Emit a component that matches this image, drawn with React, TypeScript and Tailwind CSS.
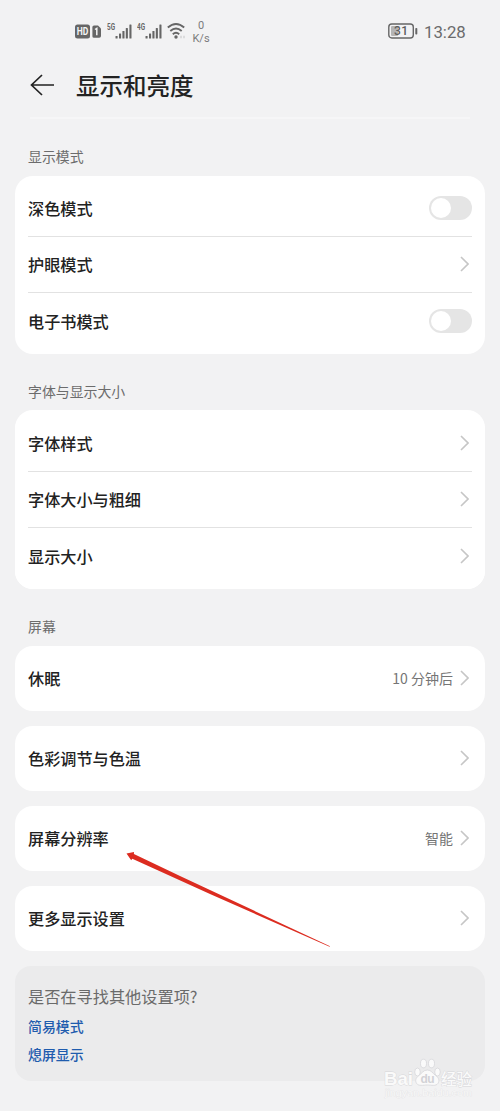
import type { ReactNode } from "react";

function Chevron() {
  return (
    <svg className="block h-4 w-[9px] shrink-0" viewBox="0 0 9 16" fill="none" stroke="#c6c6c6" strokeWidth="1.6">
      <path d="M1 1 L8 8 L1 15" />
    </svg>
  );
}

function Toggle() {
  return (
    <div className="flex h-6 w-[43px] shrink-0 items-center rounded-full bg-[#e5e5e5] px-[2px]">
      <div className="h-5 w-5 rounded-full bg-white" />
    </div>
  );
}

function Row({ label, value, toggle, last }: { label: string; value?: string; toggle?: boolean; last?: boolean }) {
  return (
    <div className={last ? "flex h-14 items-center" : "flex h-[56.5px] items-center border-b border-[#e2e2e2]"}>
      <div className="flex-1 text-[16.15px] font-medium text-[#222222]">{label}</div>
      {value && <div className="mr-[7px] text-sm text-[#757575]">{value}</div>}
      {toggle ? (
        <Toggle />
      ) : (
        <div className="mr-[3px]">
          <Chevron />
        </div>
      )}
    </div>
  );
}

function Card({ children }: { children: ReactNode }) {
  return <div className="h-[178px] rounded-[18px] bg-white px-[13px] pt-1">{children}</div>;
}

function SingleCard({ label, value }: { label: string; value?: string }) {
  return (
    <div className="h-[65px] rounded-[18px] bg-white px-[13px] pt-[4px]">
      <Row label={label} value={value} last />
    </div>
  );
}

function Label({ children }: { children: ReactNode }) {
  return <div className="pl-[13px] text-[13.9px] leading-5 text-[#6c6c6c]">{children}</div>;
}

function Signal({ label }: { label: string }) {
  return (
    <svg className="block h-[18px] w-[26px]" viewBox="0 0 26 18" fill="#666666">
      <text x="0" y="8" fontSize="8.5" fontWeight="700" textLength="8" lengthAdjust="spacingAndGlyphs" fontFamily="Roboto, sans-serif">
        {label}
      </text>
      <rect x="8.5" y="14" width="2.1" height="2.5" rx=".5" />
      <rect x="12" y="11.5" width="2.1" height="5" rx=".5" />
      <rect x="15.4" y="9" width="2.1" height="7.5" rx=".5" />
      <rect x="18.8" y="6" width="2.1" height="10.5" rx=".5" />
      <rect x="22.4" y="2.5" width="2.1" height="14" rx=".5" />
    </svg>
  );
}

function StatusBar() {
  return (
    <div className="flex h-16 items-start pl-[75px] pr-[34px] pt-[22px] font-[Roboto,'Noto_Sans_CJK_SC',sans-serif]">
      <svg className="mt-[2px] block h-[15px] w-[27px]" viewBox="0 0 27 15">
        <rect x="0" y=".5" width="15" height="14" rx="2.5" fill="#666666" />
        <text x="1.7" y="11.3" fontSize="10" fontWeight="700" textLength="11.6" lengthAdjust="spacingAndGlyphs" fill="#f4f4f4" fontFamily="Roboto, sans-serif">
          HD
        </text>
        <path d="M19 1.5h4l3 3V12a1.8 1.8 0 0 1-1.8 1.8H19a1.6 1.6 0 0 1-1.6-1.6V3.1A1.6 1.6 0 0 1 19 1.5Z" fill="#666666" />
        <path d="M20 5.5l1.8-1.2v7" fill="none" stroke="#f4f4f4" strokeWidth="1.5" />
      </svg>
      <div className="ml-[5px]">
        <Signal label="5G" />
      </div>
      <div className="ml-[4px]">
        <Signal label="4G" />
      </div>
      <svg className="ml-[4px] block h-[18px] w-[20px]" viewBox="0 0 20 18" fill="none" stroke="#666666" strokeWidth="1.9">
        <path d="M.8 5.5Q9 -1.7 17.2 5.5" />
        <path d="M3.3 9Q9 4 14.7 9" />
        <path d="M5.8 12.2Q9 9.5 12.2 12.2" />
        <circle cx="9" cy="15" r="1.7" fill="#666666" stroke="none" />
        <path d="M14 13.8v2.5M17 13.8v2.5" stroke="#d2d2d2" strokeWidth="1.4" />
      </svg>
      <div className="-mt-[3px] ml-[4px] w-5 text-center text-[11px] leading-[13px] text-[#7b7b7b]">
        <div>0</div>
        <div>K/s</div>
      </div>
      <svg className="ml-auto block h-[18px] w-[30px]" viewBox="0 0 30 18">
        <rect x=".8" y="2" width="24.5" height="14" rx="3" fill="none" stroke="#666666" strokeWidth="1.4" />
        <rect x="3" y="4" width="7" height="10" rx="1" fill="#b4b4b4" />
        <rect x="27.3" y="6" width="2" height="6.5" rx=".8" fill="#666666" />
        <text x="6" y="13.4" fontSize="12" fontWeight="500" textLength="14" fill="#5c5c5c" fontFamily="Roboto, sans-serif">
          31
        </text>
      </svg>
      <div className="ml-[6px] w-[42px] whitespace-nowrap text-[16.8px] leading-[21px] text-[#6b6b6b]">13:28</div>
    </div>
  );
}

function Watermark() {
  return (
    <svg className="absolute left-[382px] top-[1054px] h-[46px] w-[94px]" viewBox="0 0 94 46" fill="#fafafa" stroke="#d6d6d9" strokeWidth=".8">
      <text x="2" y="31" fontSize="19" fontWeight="700" textLength="29" lengthAdjust="spacingAndGlyphs" fontFamily="Liberation Sans, sans-serif" paintOrder="stroke">
        Bai
      </text>
      <ellipse cx="35.5" cy="18" rx="2.8" ry="4" />
      <ellipse cx="41.5" cy="9.5" rx="3" ry="4.3" />
      <ellipse cx="49.5" cy="9.5" rx="3" ry="4.3" />
      <ellipse cx="55.5" cy="18" rx="2.8" ry="4" />
      <path d="M45.3 16c4 0 5.2 3.2 8.5 5.6 3.4 2.5 3.7 5.5 2.2 7.8-2 3-6.6 1.6-10.7 1.6s-8.7 1.4-10.7-1.6c-1.5-2.3-1.2-5.3 2.2-7.8 3.3-2.4 4.5-5.6 8.5-5.6Z" />
      <text x="38.5" y="29" fontSize="12" fontWeight="700" textLength="14" fill="#d2d2d6" stroke="none" fontFamily="Liberation Sans, sans-serif">
        du
      </text>
      <text x="59" y="31" fontSize="15.5" fontWeight="500" textLength="31" fontFamily="'Noto Sans CJK SC', sans-serif" paintOrder="stroke">
        经验
      </text>
      <text x="3" y="42" fontSize="9.5" textLength="87" lengthAdjust="spacingAndGlyphs" fill="#f8f8f8" stroke="#e2e2e3" strokeWidth=".6" fontFamily="Liberation Sans, sans-serif" paintOrder="stroke">
        jingyan.baidu.com
      </text>
    </svg>
  );
}

export default function App() {
  return (
    <div className="relative h-[1111px] w-[500px] overflow-hidden bg-[#f2f2f3] font-['Noto_Sans_CJK_SC',sans-serif]">
      <StatusBar />
      <div className="flex h-[42px] items-center pl-[30px]">
        <svg className="block h-[22px] w-6" viewBox="0 0 24 22" fill="none" stroke="#222222" strokeWidth="1.7">
          <path d="M24 11H1.5M12 1L1.5 11L12 21" />
        </svg>
        <h1 className="ml-[22px] text-[23.5px] font-medium leading-[42px] text-[#222222]">显示和亮度</h1>
      </div>
      <div className="px-[15px]">
        <div className="mx-[15px] mt-[11px] h-[2px] bg-[#f6f6f7]" />
        <div className="mt-[27px]">
          <Label>显示模式</Label>
        </div>
        <div className="mt-[10px]">
          <Card>
            <Row label="深色模式" toggle />
            <Row label="护眼模式" />
            <Row label="电子书模式" toggle last />
          </Card>
        </div>
        <div className="mt-[27px]">
          <Label>字体与显示大小</Label>
        </div>
        <div className="mt-[9px] rounded-[18px] bg-white pt-px">
          <Card>
            <Row label="字体样式" />
            <Row label="字体大小与粗细" />
            <Row label="显示大小" last />
          </Card>
        </div>
        <div className="mt-[27px]">
          <Label>屏幕</Label>
        </div>
        <div className="mt-[10px] flex flex-col gap-[15px]">
          <SingleCard label="休眠" value="10 分钟后" />
          <SingleCard label="色彩调节与色温" />
          <SingleCard label="屏幕分辨率" value="智能" />
          <SingleCard label="更多显示设置" />
          <div className="h-[115px] rounded-[16px] bg-[#ebebec] px-[13px] pt-[18px]">
            <div className="text-[16.2px] leading-6 text-[#6a6a6a]">是否在寻找其他设置项?</div>
            <div className="mt-[4px] text-[13.95px] font-medium leading-7 text-[#1f5cae]">简易模式</div>
            <div className="text-[13.95px] font-medium leading-[29px] text-[#1f5cae]">熄屏显示</div>
          </div>
        </div>
      </div>
      <svg className="absolute left-[120px] top-[845px] h-[110px] w-[220px]" viewBox="0 0 220 110">
        <path d="M6.5 8.5L14 7L13.9 9L60 31L210 101.2L209.6 101.8L90 49L12.3 13.7L11.2 15.3Z" fill="#dc2c20" />
      </svg>
      <Watermark />
    </div>
  );
}
